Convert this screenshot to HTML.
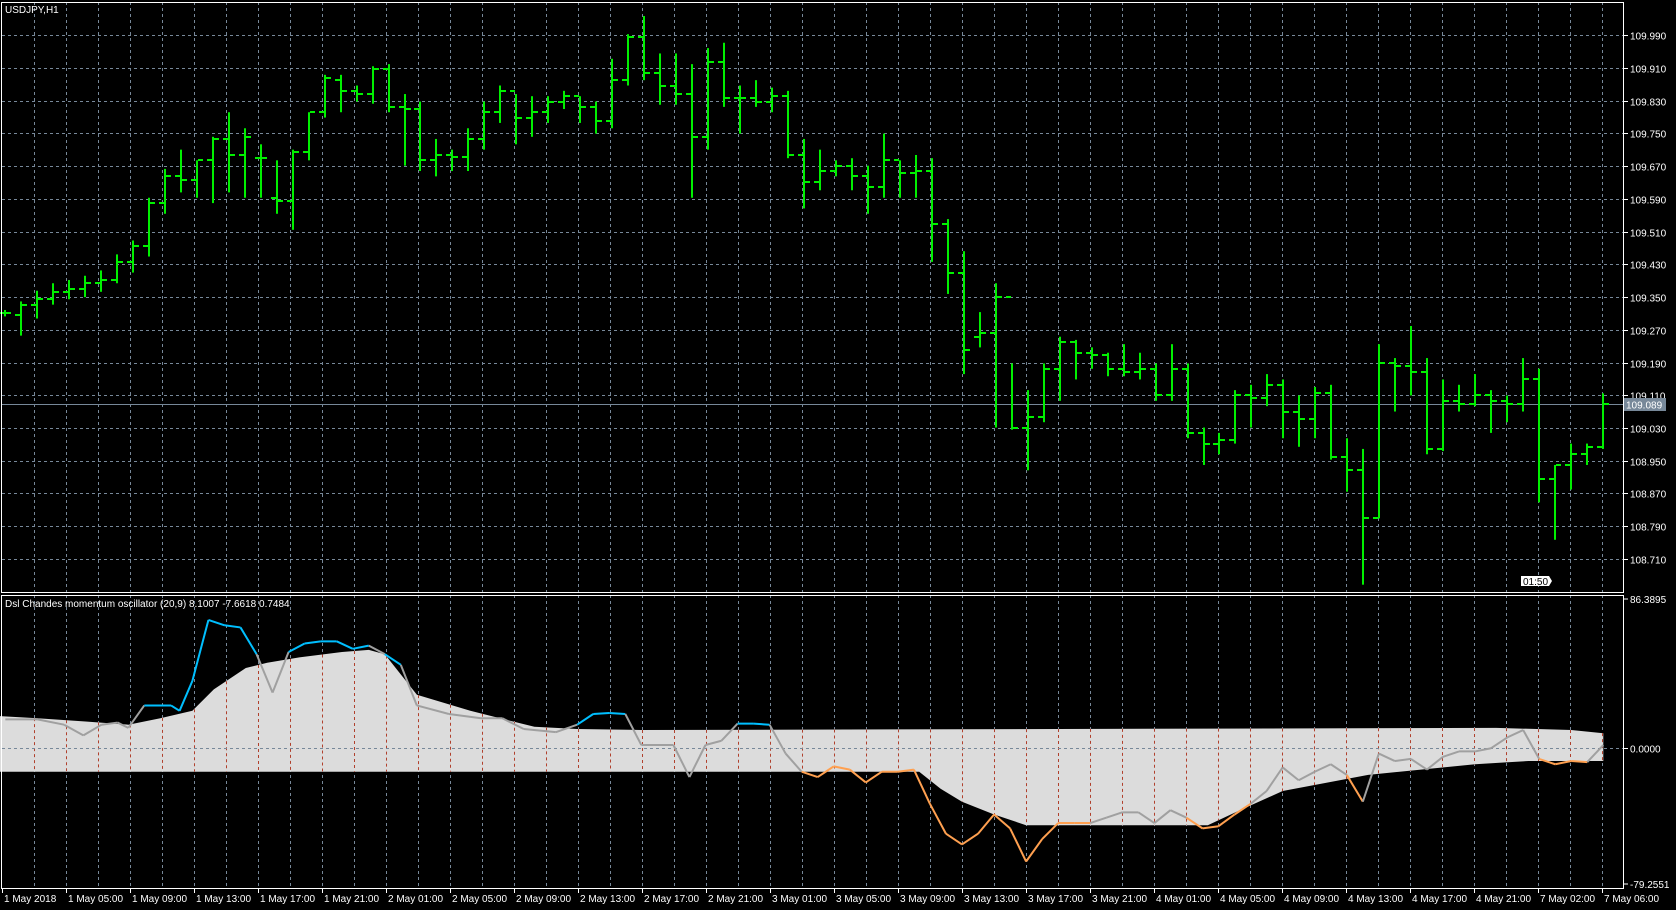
<!DOCTYPE html>
<html><head><meta charset="utf-8">
<style>
html,body{margin:0;padding:0;background:#000;width:1676px;height:910px;overflow:hidden}
svg{display:block}
text{font-family:"Liberation Sans",sans-serif;font-size:10px;fill:#fff}
</style></head>
<body>
<svg id="s" width="1676" height="910" xmlns="http://www.w3.org/2000/svg"></svg>
<script>
const S=document.getElementById('s');const K=1676/1568;
let h='';
const R=1623, T1=2,B1=592,T2=595,B2=888;
for(let x=34;x<R;x+=32){h+=`<line x1="${x+.5}" y1="${T1}" x2="${x+.5}" y2="${B1}" stroke="#778899" stroke-dasharray="3,3"/>`;h+=`<line x1="${x+.5}" y1="${T2}" x2="${x+.5}" y2="${B2}" stroke="#778899" stroke-dasharray="3,3"/>`;}
const prices=[];for(let i=0;i<=16;i++){prices.push((109.990-0.08*i).toFixed(3));}
prices.forEach((p,i)=>{const y=Math.round(35.3+i*32.72)+.5;h+=`<line x1="2" y1="${y}" x2="${R}" y2="${y}" stroke="#778899" stroke-dasharray="3,3"/><line x1="${R}" y1="${y}" x2="${R+5}" y2="${y}" stroke="#fff"/><text x="${R+7}" y="${y+4}">${p}</text>`;});
function py(sy){return sy*K;}
const bars=[[293,290,296,293,293],[0,282,314,295,285],[0,272,298,285,280],[0,265,285,280,273],[0,262,280,273,270],[0,258,278,270,265],[0,253,273,265,262],[0,238,265,262,245],[0,225,255,245,230],[0,185,240,230,190],[0,158,200,190,165],[0,140,180,165,168],[0,150,185,168,150],[0,128,190,150,130],[0,105,180,130,145],[0,120,185,145,128],[0,135,185,148,148],[0,150,200,185,188],[0,140,215,188,142],[0,105,150,142,105],[0,70,110,105,73],[0,70,105,75,85],[0,80,95,85,88],[0,62,97,88,65],[0,60,105,65,100],[0,88,155,100,102],[0,95,160,102,150],[0,130,165,150,145],[0,140,160,145,147],[0,120,160,147,130],[0,95,140,130,105],[0,80,115,105,85],[0,88,135,85,110],[0,90,128,110,105],[0,90,115,105,95],[0,85,102,95,90],[0,90,115,90,100],[0,95,125,100,113],[0,55,120,113,75],[0,32,80,75,35],[0,15,75,35,68],[0,50,98,68,80],[0,50,98,80,88],[0,60,185,88,128],[0,45,140,128,58],[0,40,100,58,92],[0,80,125,92,92],[0,75,100,92,95],[0,82,105,95,90],[0,85,148,90,145],[0,130,195,145,170],[0,140,178,170,160],[0,150,165,160,155],[0,148,178,155,165],[0,155,200,165,175],[0,125,185,175,150],[0,150,185,150,162],[0,145,185,162,160],[0,148,245,160,210],[0,205,275,210,255],[0,235,350,255,327],[0,292,325,315,312],[0,265,400,312,278],[0,340,402,278,400],[0,365,440,400,390],[0,340,395,390,345],[0,315,375,345,320],[0,318,355,320,330],[0,325,345,330,332],[0,330,352,332,345],[0,322,352,345,348],[0,330,355,348,345],[0,340,375,345,370],[0,322,375,370,345],[0,340,410,345,405],[0,400,435,405,415],[0,405,425,415,412],[0,365,415,412,370],[0,360,400,370,372],[0,350,380,372,360],[0,355,410,360,385],[0,370,418,385,392],[0,362,410,392,368],[0,360,430,368,428],[0,410,460,428,440],[0,420,547,440,485],[0,322,485,485,340],[0,335,385,340,342],[0,305,370,342,348],[0,335,425,348,420],[0,355,422,420,375],[0,360,385,375,378],[0,350,380,378,370],[0,365,405,370,375],[0,370,395,375,378],[0,335,385,378,355],[0,345,470,355,448],[0,435,505,448,435],[0,415,458,435,425],[0,415,435,425,418],[0,368,420,418,378]];
h+=`<line x1="2" y1="404.5" x2="${R}" y2="404.5" stroke="#778899"/>`;
const G='#00f000';
bars.forEach((b,i)=>{const x=Math.round(5+i*15.98);const hi=py(b[1]),lo=py(b[2]),o=Math.round(py(b[3])),c=Math.round(py(b[4]));
h+=`<rect x="${x-1}" y="${hi}" width="2" height="${lo-hi}" fill="${G}"/><rect x="${x-6}" y="${o-1}" width="5" height="2" fill="${G}"/><rect x="${x+1}" y="${c-1}" width="5" height="2" fill="${G}"/>`;});
h+=`<rect x="${R+1}" y="398" width="42" height="13" fill="#778899"/><text x="${R+3}" y="408.5">109.089</text>`;
h+=`<path d="M1521 576 h28 l3 5 l-3 5 h-28 z" fill="#fff"/><text x="1523" y="585" style="fill:#000">01:50</text>`;
h+=`<text x="5" y="13">USDJPY,H1</text>`;
const up=[[0,670],[35,672],[80,675],[120,678],[150,672],[180,665],[200,645],[230,625],[250,620],[280,615],[320,610],[345,608],[360,612],[390,650],[440,665],[500,680],[540,682],[600,683],[1400,681],[1470,683],[1500,686]];
const lw=[[0,722],[860,722],[880,738],[900,750],[930,762],[960,772],[1130,772],[1160,758],[1200,740],[1280,725],[1380,715],[1430,712],[1500,712]];
function interp(a,x){for(let i=1;i<a.length;i++){if(x<=a[i][0]){const t=(x-a[i-1][0])/(a[i][0]-a[i-1][0]);return a[i-1][1]+t*(a[i][1]-a[i-1][1]);}}return a[a.length-1][1];}
let poly=up.map(p=>`${(p[0]*K).toFixed(1)},${(p[1]*K).toFixed(1)}`).join(' ')+' '+lw.slice().reverse().map(p=>`${(p[0]*K).toFixed(1)},${(p[1]*K).toFixed(1)}`).join(' ');
h+=`<polygon points="${poly}" fill="#dcdcdc"/>`;
for(let x=34;x<1603;x+=32){const sx=x/K;const a=interp(up,sx)*K,b=interp(lw,sx)*K;h+=`<line x1="${x+.5}" y1="${a}" x2="${x+.5}" y2="${b}" stroke="#b0402c" stroke-dasharray="3,3"/>`;}
h+=`<line x1="2" y1="748.5" x2="${R}" y2="748.5" stroke="#778899" stroke-dasharray="3,3"/>`;
const sg=[[5,673],[35,673],[60,678],[78,688],[95,678],[110,676],[120,681],[135,660],[160,660],[168,665],[180,637],[195,580],[210,585],[225,587],[240,612],[255,648],[270,610],[285,602],[300,600],[315,600],[330,607],[345,604],[360,612],[375,622],[390,660],[420,668],[450,672],[470,672],[490,682],[520,685],[540,678],[555,668],[570,667],[585,668],[600,697],[630,697],[645,727],[660,697],[675,693],[690,677],[705,677],[720,678],[735,705],[750,722],[765,727],[780,717],[795,720],[810,732],[825,722],[840,722],[855,720],[870,752],[885,780],[900,790],[915,780],[930,762],[945,775],[960,806],[975,785],[990,770],[1005,770],[1020,770],[1035,765],[1050,760],[1065,760],[1080,770],[1095,758],[1110,765],[1125,775],[1140,773],[1155,762],[1170,752],[1185,740],[1200,718],[1215,730],[1230,722],[1245,715],[1260,725],[1275,750],[1290,705],[1305,712],[1320,710],[1335,720],[1350,708],[1365,703],[1380,703],[1395,700],[1410,690],[1425,683],[1440,710],[1455,715],[1470,712],[1485,713],[1500,697]];
for(let i=1;i<sg.length;i++){const a=sg[i-1],b=sg[i];const mx=(a[0]+b[0])/2,my=(a[1]+b[1])/2;let col='#a0a0a0';
if(Math.max(a[1],b[1])<=interp(up,mx)+1&&my<interp(up,mx))col='#00bfff';else if(my>interp(lw,mx)-4&&Math.min(a[1],b[1])>=interp(lw,mx)-8)col='#ffa050';
h+=`<line x1="${a[0]*K}" y1="${a[1]*K}" x2="${b[0]*K}" y2="${b[1]*K}" stroke="${col}" stroke-width="2"/>`;}
h+=`<text x="5" y="607">Dsl Chandes momentum oscillator (20,9) 8.1007 -7.6618 0.7484</text>`;
[[599,'86.3895'],[748.5,'0.0000'],[884,'-79.2551']].forEach(v=>{h+=`<line x1="${R}" y1="${v[0]}" x2="${R+5}" y2="${v[0]}" stroke="#fff"/><text x="${R+7}" y="${v[0]+4}">${v[1]}</text>`;});
h+=`<rect x="1.5" y="${T1+.5}" width="${R-1}" height="${B1-T1}" fill="none" stroke="#fff"/>`;
h+=`<rect x="1.5" y="${T2+.5}" width="${R-1}" height="${B2-T2}" fill="none" stroke="#fff"/>`;
const lab=['1 May 2018','1 May 05:00','1 May 09:00','1 May 13:00','1 May 17:00','1 May 21:00','2 May 01:00','2 May 05:00','2 May 09:00','2 May 13:00','2 May 17:00','2 May 21:00','3 May 01:00','3 May 05:00','3 May 09:00','3 May 13:00','3 May 17:00','3 May 21:00','4 May 01:00','4 May 05:00','4 May 09:00','4 May 13:00','4 May 17:00','4 May 21:00','7 May 02:00','7 May 06:00'];
lab.forEach((l,i)=>{const x=2+64*i;h+=`<line x1="${x+.5}" y1="${B2}" x2="${x+.5}" y2="${B2+5}" stroke="#fff"/><text x="${x+2}" y="${B2+14}">${l}</text>`;});
S.innerHTML=h;
</script>
</body></html>
